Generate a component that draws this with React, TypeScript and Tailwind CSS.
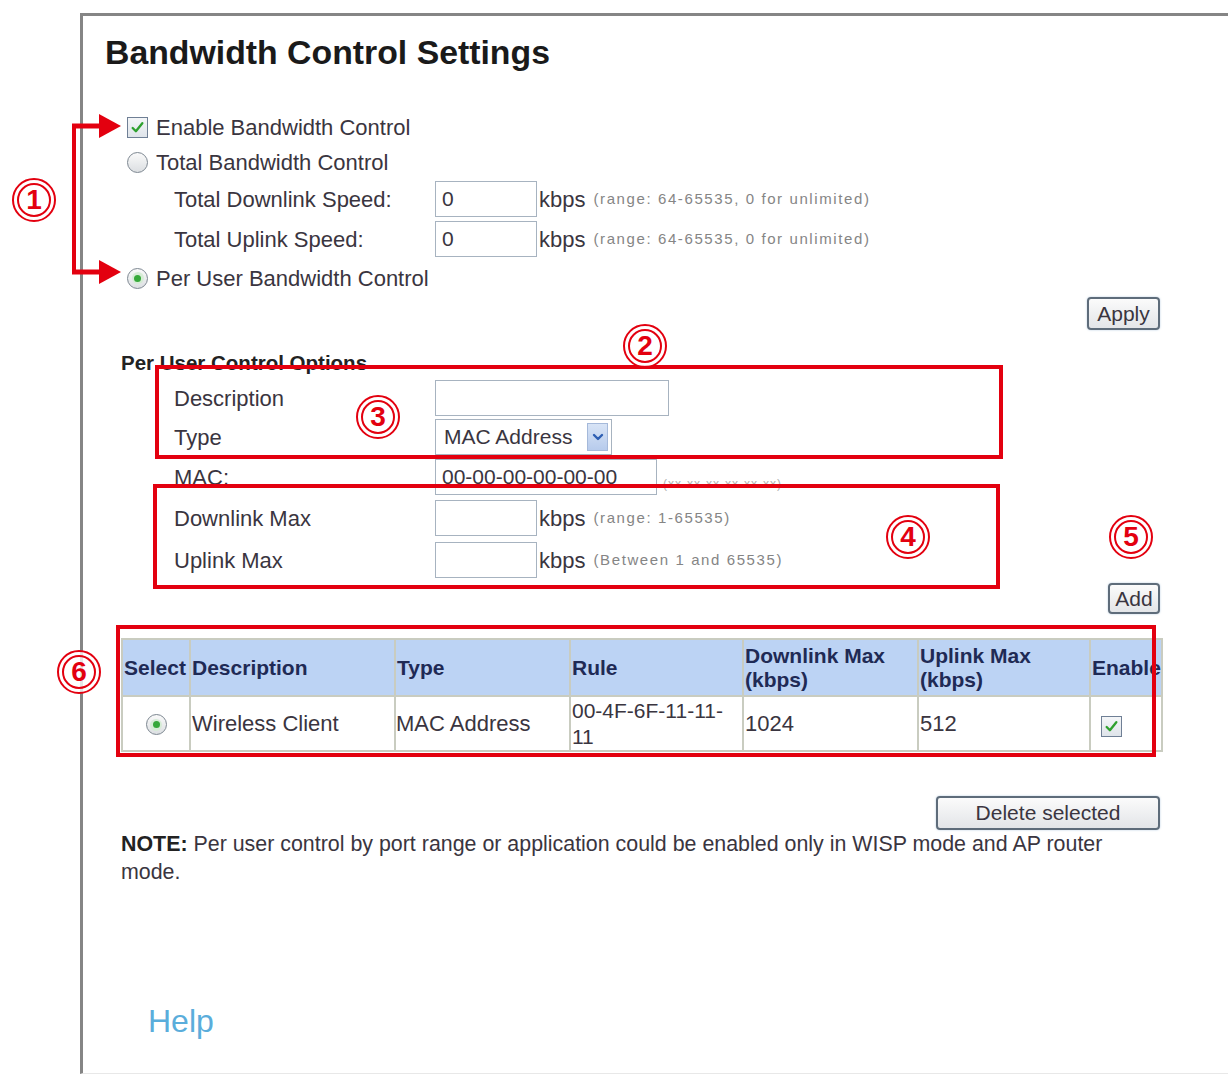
import React from "react";

const RED = "#e3000f";

function CheckBox() {
  return (
    <span className="inline-flex w-[21px] h-[21px] items-center justify-center border border-[#6f7f95] bg-gradient-to-b from-[#f4f6f8] to-[#dfe4ea] shrink-0">
      <svg width="15" height="15" viewBox="0 0 14 14">
        <path d="M2.5 7.5 L5.5 10.5 L11.5 3" fill="none" stroke="#2fa12f" strokeWidth="2.2" strokeLinecap="round" strokeLinejoin="round" />
      </svg>
    </span>
  );
}

function Radio({ checked }: { checked?: boolean }) {
  return (
    <span className="inline-flex w-[21px] h-[21px] rounded-full items-center justify-center border border-[#7d8791] bg-gradient-to-b from-[#fafafa] to-[#dcdfe2] shrink-0">
      {checked && (
        <span className="w-[12px] h-[12px] rounded-full bg-[#d6ecd6] flex items-center justify-center">
          <span className="w-[7px] h-[7px] rounded-full bg-[#36a93a]" />
        </span>
      )}
    </span>
  );
}

function Input({ w, value }: { w: string; value?: string }) {
  return (
    <div className={`${w} h-[36px] border border-[#a7b3c0] bg-white flex items-center pl-[6px] text-[21px] text-[#3a3540] shrink-0`}>
      {value}
    </div>
  );
}

function Btn({ children, w, h }: { children: React.ReactNode; w: string; h: string }) {
  return (
    <div className={`${w} ${h} rounded-[4px] border-2 border-[#5e6c7a] bg-gradient-to-b from-[#fbfbfb] to-[#e3e5e8] flex items-center justify-center text-[21px] text-[#3a3540] shadow-[0_0_2px_rgba(120,160,200,0.6)]`}>
      {children}
    </div>
  );
}

function Circle({ n, x, y }: { n: string; x: string; y: string }) {
  return (
    <div className={`absolute ${x} ${y} w-[44px] h-[44px] rounded-full border-2 border-[#e3000f] bg-white/80 flex items-center justify-center`}>
      <div className="w-[34px] h-[34px] rounded-full border-2 border-[#e3000f] flex items-center justify-center text-[28px] font-bold text-[#e3000f] leading-none">
        {n}
      </div>
    </div>
  );
}

export default function App() {
  const labelRow = "flex items-center pl-[91px]";
  const label = "w-[261px] shrink-0";
  const small = "text-[15px] text-[#858585] tracking-[1.6px] ml-[8px]";
  return (
    <div className="relative w-[1228px] h-[1076px] bg-white overflow-hidden font-['Liberation_Sans',Arial,sans-serif] text-[#3a3540]">
      <div className="mt-[13px] ml-[80px] w-[1148px] h-[1061px] border-l-[3px] border-t-[3px] border-b border-l-[#858585] border-t-[#858585] border-b-[#e8e8e8]">
        <div className="w-[1077px] text-[22px]">
          <div className="mt-[17px] h-[38px] leading-[38px] pl-[22px] text-[33.8px] font-bold text-[#1a1a1a]">
            Bandwidth Control Settings
          </div>

          <div className="mt-[38px] h-[36px] flex items-center pl-[44px] gap-[8px]">
            <CheckBox />
            <span>Enable Bandwidth Control</span>
          </div>
          <div className="h-[34px] flex items-center pl-[44px] gap-[8px]">
            <Radio />
            <span>Total Bandwidth Control</span>
          </div>
          <div className={`${labelRow} h-[40px]`}>
            <span className={label}>Total Downlink Speed:</span>
            <Input w="w-[102px]" value="0" />
            <span className="ml-[2px]">kbps</span>
            <span className={small}>(range: 64-65535, 0 for unlimited)</span>
          </div>
          <div className={`${labelRow} h-[40px]`}>
            <span className={label}>Total Uplink Speed:</span>
            <Input w="w-[102px]" value="0" />
            <span className="ml-[2px]">kbps</span>
            <span className={small}>(range: 64-65535, 0 for unlimited)</span>
          </div>
          <div className="h-[38px] flex items-center pl-[44px] gap-[8px]">
            <Radio checked />
            <span>Per User Bandwidth Control</span>
          </div>
          <div className="h-[34px] flex items-start justify-end">
            <Btn w="w-[73px]" h="h-[33px]">Apply</Btn>
          </div>

          <div className="mt-[17px] h-[30px] flex items-center pl-[38px] text-[20.5px] font-bold text-[#222]">
            Per User Control Options
          </div>
          <div className={`${labelRow} mt-[1px] h-[38px]`}>
            <span className={label}>Description</span>
            <Input w="w-[234px]" />
          </div>
          <div className={`${labelRow} h-[40px]`}>
            <span className={label}>Type</span>
            <div className="w-[177px] h-[36px] border border-[#a7b3c0] bg-white flex items-center pl-[8px] pr-[3px] justify-between text-[21px]">
              <span>MAC Address</span>
              <span className="w-[21px] h-[28px] bg-gradient-to-b from-[#d8e4f6] to-[#b7cbec] border border-[#a5b9da] flex items-center justify-center">
                <svg width="12" height="10" viewBox="0 0 12 10">
                  <path d="M2 3 L6 7 L10 3" fill="none" stroke="#2e5fb3" strokeWidth="2.4" strokeLinecap="round" strokeLinejoin="round" />
                </svg>
              </span>
            </div>
          </div>
          <div className={`${labelRow} h-[40px]`}>
            <span className={label}>MAC:</span>
            <Input w="w-[222px]" value="00-00-00-00-00-00" />
            <span className="ml-[6px] mt-[14px] text-[12px] text-[#b0b0b0] tracking-[1px]">(xx-xx-xx-xx-xx-xx)</span>
          </div>
          <div className={`${labelRow} h-[42px]`}>
            <span className={label}>Downlink Max</span>
            <Input w="w-[102px]" />
            <span className="ml-[2px]">kbps</span>
            <span className={small}>(range: 1-65535)</span>
          </div>
          <div className={`${labelRow} h-[42px]`}>
            <span className={label}>Uplink Max</span>
            <Input w="w-[102px]" />
            <span className="ml-[2px]">kbps</span>
            <span className={small}>(Between 1 and 65535)</span>
          </div>
          <div className="mt-[2px] h-[31px] flex justify-end">
            <Btn w="w-[52px]" h="h-[31px]">Add</Btn>
          </div>

          <table className="mt-[24px] ml-[38px] w-[1040px] border-collapse table-fixed">
            <colgroup>
              <col className="w-[68px]" />
              <col className="w-[205px]" />
              <col className="w-[175px]" />
              <col className="w-[173px]" />
              <col className="w-[175px]" />
              <col className="w-[172px]" />
              <col className="w-[72px]" />
            </colgroup>
            <thead>
              <tr className="h-[57px] bg-[#bcd3f4] text-[#1f2a55] text-[21px] font-bold leading-[24px]">
                {["Select", "Description", "Type", "Rule"].map((h) => (
                  <th key={h} className="border-2 border-[#c9ccc0] text-left font-bold px-[1px] align-middle whitespace-nowrap overflow-hidden">
                    {h}
                  </th>
                ))}
                <th className="border-2 border-[#c9ccc0] text-left font-bold px-[1px] align-middle">
                  Downlink Max<br />(kbps)
                </th>
                <th className="border-2 border-[#c9ccc0] text-left font-bold px-[1px] align-middle">
                  Uplink Max<br />(kbps)
                </th>
                <th className="border-2 border-[#c9ccc0] text-left font-bold px-[1px] align-middle whitespace-nowrap overflow-hidden">
                  Enable
                </th>
              </tr>
            </thead>
            <tbody>
              <tr className="h-[55px] text-[22px] leading-[26px] text-[#3a3540]">
                <td className="border-2 border-[#c9ccc0] text-center align-middle">
                  <span className="inline-flex align-middle"><Radio checked /></span>
                </td>
                <td className="border-2 border-[#c9ccc0] px-[1px]">Wireless Client</td>
                <td className="border-2 border-[#c9ccc0] px-[0px]">MAC Address</td>
                <td className="border-2 border-[#c9ccc0] px-[1px] align-top pt-[1px] text-[21px] leading-[26px]">00-4F-6F-11-11-<br />11</td>
                <td className="border-2 border-[#c9ccc0] px-[1px]">1024</td>
                <td className="border-2 border-[#c9ccc0] px-[1px]">512</td>
                <td className="border-2 border-[#c9ccc0] pl-[10px]">
                  <span className="inline-flex align-middle mt-[3px]"><CheckBox /></span>
                </td>
              </tr>
            </tbody>
          </table>

          <div className="mt-[44px] h-[34px] flex justify-end">
            <Btn w="w-[224px]" h="h-[34px]">Delete selected</Btn>
          </div>
          <div className="pl-[38px] text-[21.4px] leading-[28px] whitespace-nowrap">
            <div><span className="font-bold text-[#222]">NOTE:</span> Per user control by port range or application could be enabled only in WISP mode and AP router</div>
            <div>mode.</div>
          </div>
          <div className="mt-[115px] pl-[65px] text-[32px] leading-[40px] text-[#5aaddb]">Help</div>
        </div>
      </div>

      {/* annotations overlay */}
      <svg className="absolute left-0 top-0 pointer-events-none" width="1228" height="1076" viewBox="0 0 1228 1076">
        <line x1="74" y1="124" x2="74" y2="274" stroke={RED} strokeWidth="4" />
        <line x1="72" y1="126" x2="102" y2="126" stroke={RED} strokeWidth="5" />
        <polygon points="99,114 121,126 99,138" fill={RED} />
        <line x1="72" y1="272" x2="102" y2="272" stroke={RED} strokeWidth="5" />
        <polygon points="99,260 121,272 99,284" fill={RED} />
        <rect x="157" y="367" width="844" height="90" fill="none" stroke={RED} strokeWidth="4" />
        <rect x="155" y="486" width="843" height="101" fill="none" stroke={RED} strokeWidth="4" />
        <rect x="118" y="627" width="1036" height="128" fill="none" stroke={RED} strokeWidth="4" />
      </svg>
      <Circle n="1" x="left-[12px]" y="top-[178px]" />
      <Circle n="2" x="left-[623px]" y="top-[324px]" />
      <Circle n="3" x="left-[356px]" y="top-[395px]" />
      <Circle n="4" x="left-[886px]" y="top-[515px]" />
      <Circle n="5" x="left-[1109px]" y="top-[515px]" />
      <Circle n="6" x="left-[57px]" y="top-[650px]" />
    </div>
  );
}
